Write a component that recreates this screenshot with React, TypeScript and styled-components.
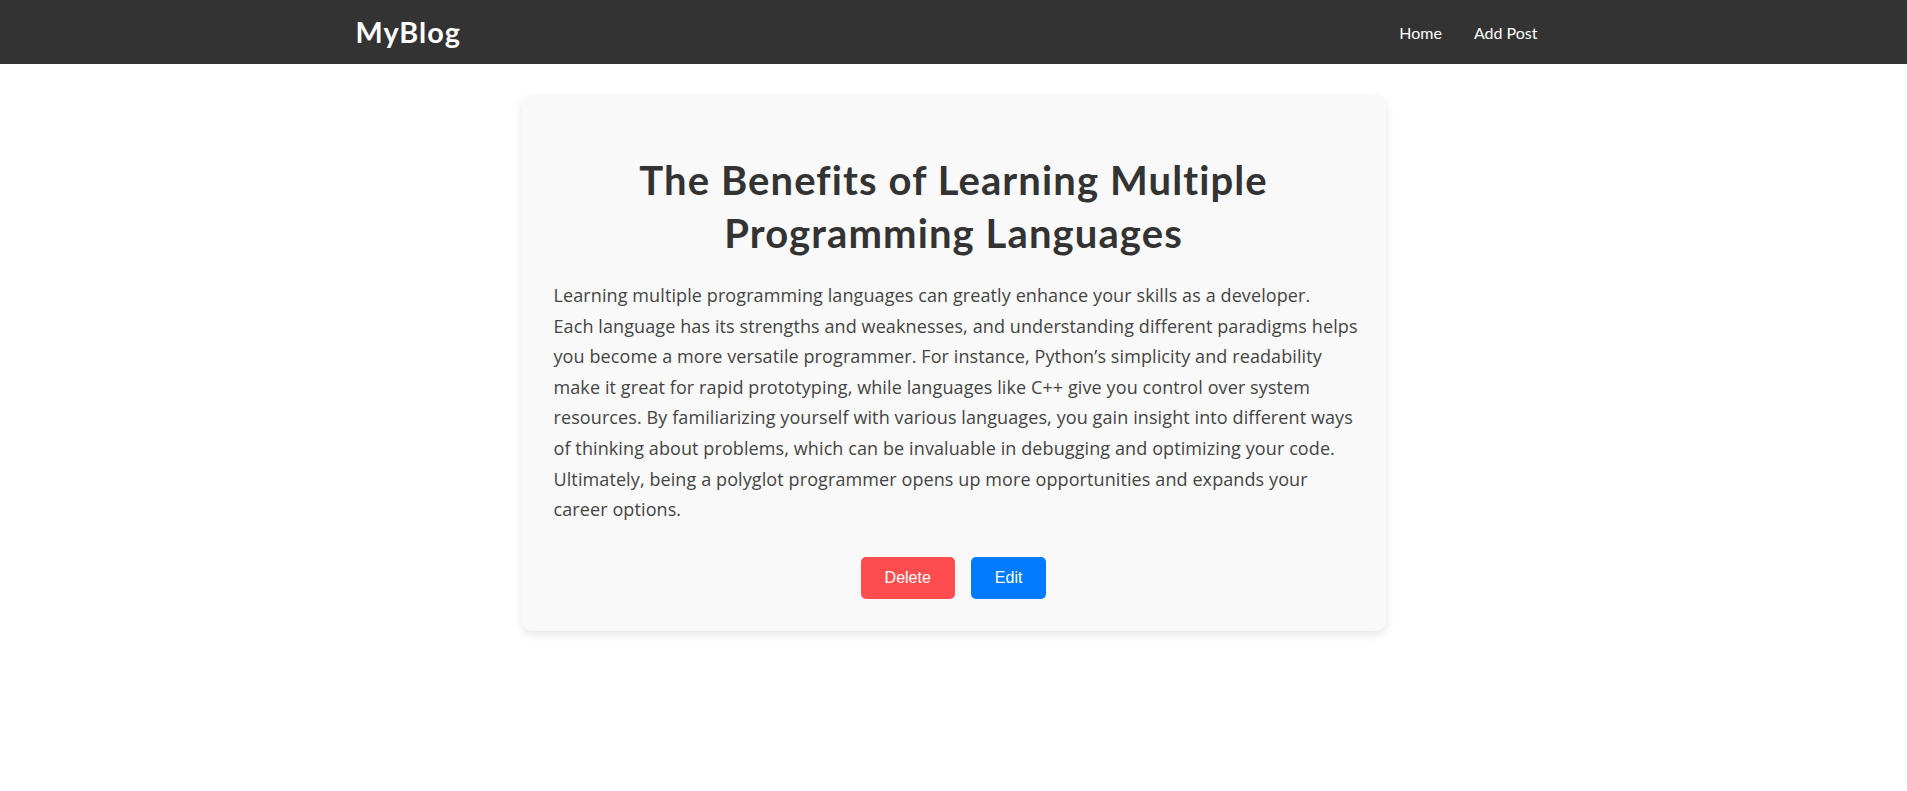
import React from "react";
import styled, { createGlobalStyle } from "styled-components";

const GlobalStyle = createGlobalStyle`
  body {
    margin: 0;
    background: #ffffff;
    font-family: Lato, "Open Sans", sans-serif;
  }
`;

const Navbar = styled.nav`
  background: #333333;
  height: 64px;
  display: flex;
  align-items: center;
`;

const NavInner = styled.div`
  width: 100%;
  max-width: 1200px;
  margin: 0 auto;
  display: flex;
  justify-content: space-between;
  align-items: center;
`;

const Logo = styled.a`
  color: #ffffff;
  font-size: 1.8rem;
  font-weight: 700;
  letter-spacing: 1px;
  text-decoration: none;
  padding-left: 2px;
`;

const NavLinks = styled.div`
  display: flex;
  align-items: center;
`;

const NavLink = styled.a`
  color: #ffffff;
  font-size: 16px;
  padding: 8px 16px;
  text-decoration: none;
  cursor: pointer;
`;

const Main = styled.main`
  padding: 31px 16px;
`;

const Card = styled.article`
  max-width: 800px;
  margin: 0 auto;
  padding: 32px;
  background: #f9f9f9;
  border-radius: 10px;
  box-shadow: 0 4px 10px rgba(0, 0, 0, 0.1);
`;

const Title = styled.h1`
  font-size: 40px;
  line-height: 53px;
  font-weight: 700;
  letter-spacing: 1.1px;
  color: #333333;
  text-align: center;
  margin: 27px 0 20px;
`;

// lines are broken where the original page wraps them
const Content = styled.p`
  font-family: "Open Sans", Lato, sans-serif;
  font-size: 18px;
  line-height: 30.6px;
  letter-spacing: 0.1px;
  white-space: nowrap;
  color: #444444;
  margin: 0;
`;

const Actions = styled.div`
  display: flex;
  justify-content: center;
  gap: 16px;
  margin-top: 32px;
`;

const Button = styled.button<{ $variant: "danger" | "primary" }>`
  font-family: "Liberation Sans", Arial, sans-serif;
  font-size: 16px;
  color: #ffffff;
  background: ${(p) => (p.$variant === "danger" ? "#ff4d4f" : "#007bff")};
  border: none;
  border-radius: 5px;
  padding: 12px 24px;
  cursor: pointer;
`;

const post = {
  title: "The Benefits of Learning Multiple Programming Languages",
  lines: [
    "Learning multiple programming languages can greatly enhance your skills as a developer.",
    "Each language has its strengths and weaknesses, and understanding different paradigms helps",
    "you become a more versatile programmer. For instance, Python\u2019s simplicity and readability",
    "make it great for rapid prototyping, while languages like C++ give you control over system",
    "resources. By familiarizing yourself with various languages, you gain insight into different ways",
    "of thinking about problems, which can be invaluable in debugging and optimizing your code.",
    "Ultimately, being a polyglot programmer opens up more opportunities and expands your",
    "career options.",
  ],
};

const App: React.FC = () => {
  return (
    <>
      <GlobalStyle />
      <Navbar>
        <NavInner>
          <Logo>MyBlog</Logo>
          <NavLinks>
            <NavLink>Home</NavLink>
            <NavLink>Add Post</NavLink>
          </NavLinks>
        </NavInner>
      </Navbar>
      <Main>
        <Card>
          <Title>{post.title}</Title>
          <Content>
            {post.lines.map((line, i) => (
              <React.Fragment key={i}>
                {i > 0 && <br />}
                {line}
              </React.Fragment>
            ))}
          </Content>
          <Actions>
            <Button $variant="danger">Delete</Button>
            <Button $variant="primary">Edit</Button>
          </Actions>
        </Card>
      </Main>
    </>
  );
};

export default App;
